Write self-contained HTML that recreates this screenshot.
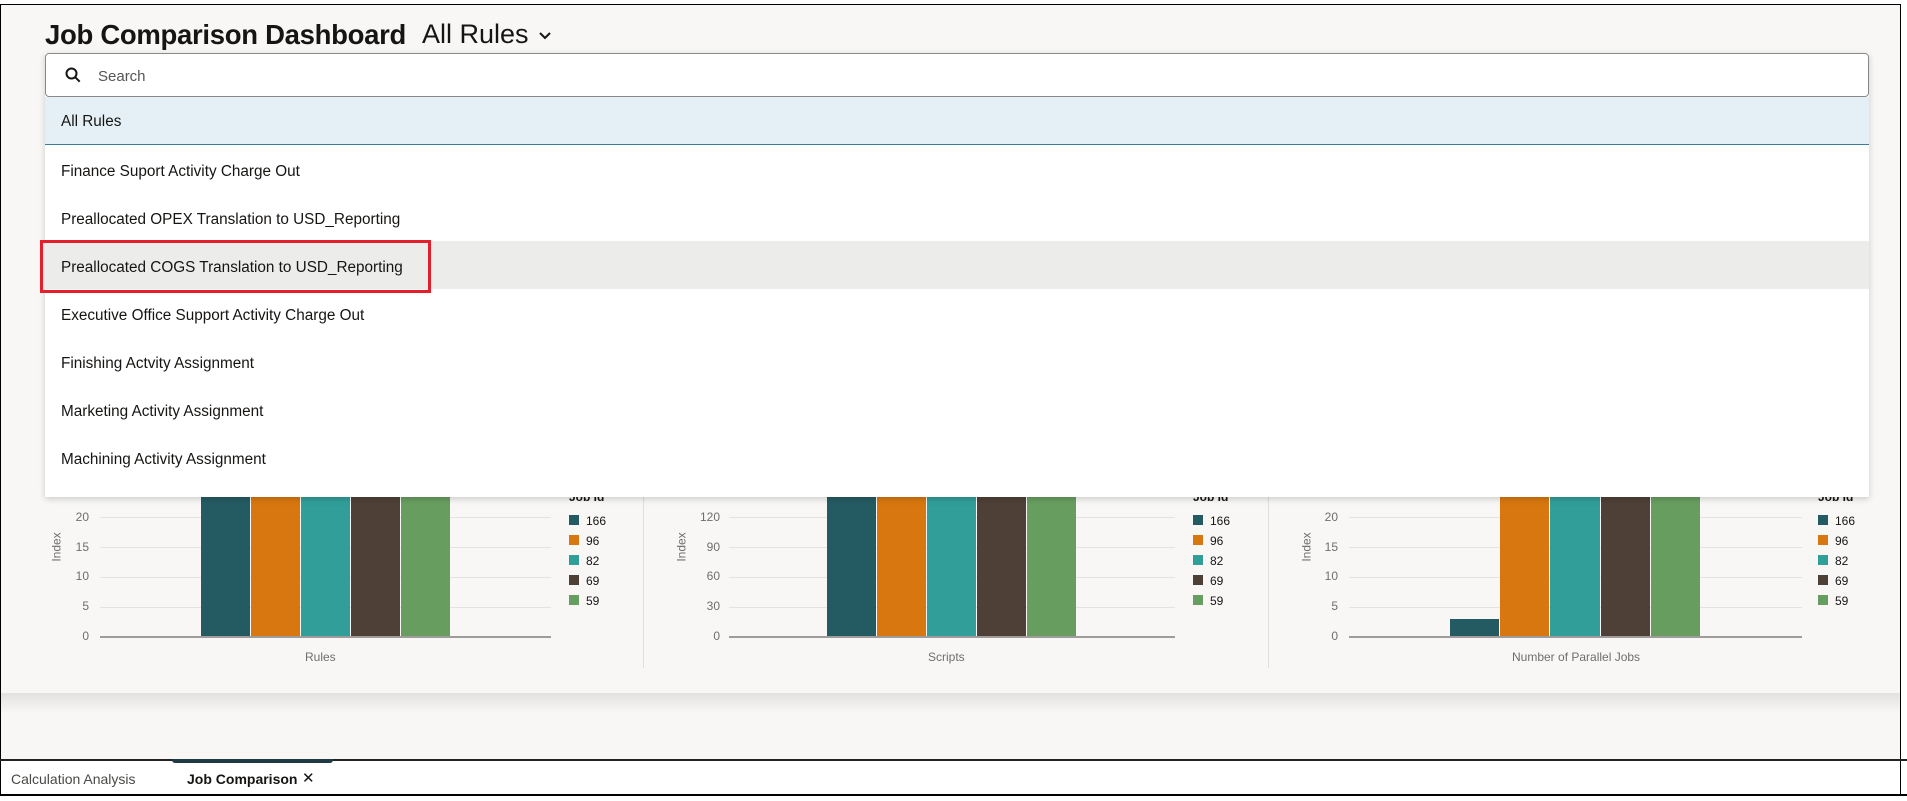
<!DOCTYPE html>
<html><head><meta charset="utf-8"><style>
*{margin:0;padding:0;box-sizing:border-box}
body{width:1907px;height:801px;overflow:hidden;background:#fff;font-family:"Liberation Sans",sans-serif;position:relative;color:#161513}
.abs{position:absolute}
.page{left:0;top:4px;width:1901px;height:755px;background:#f8f7f5;border-top:1px solid #000;border-left:1px solid #000;border-right:1px solid #000}
.panelshadow{left:1px;top:693px;width:1899px;height:20px;background:linear-gradient(#e2e1df,#f8f7f5)}
.grid{height:1px;background:#e4e3e1}
.base{height:2px;background:#9e9d9b}
.yl{font-size:12px;color:#6f6e6c;text-align:right;width:40px}
.idx{font-size:12px;color:#6f6e6c;transform:rotate(-90deg);transform-origin:center}
.bar{position:absolute}
.lg{font-size:12px;color:#161513}
.sq{width:10px;height:10px}
.dd{left:45px;top:53px;width:1824px;height:444px;background:#fff;box-shadow:0 2px 6px rgba(0,0,0,.18)}
.row{position:absolute;left:0;width:1824px;height:48px;font-size:15.3px;line-height:48px;padding-left:16px;padding-top:3px}
</style></head><body>
<div class="abs page"></div>
<div class="abs panelshadow"></div>
<div class="abs" style="left:0;top:759px;width:1907px;height:2px;background:#222"></div>
<div class="abs" style="left:0;top:761px;width:1901px;height:34px;background:#fff;border-left:1px solid #000;border-right:1px solid #000"></div>
<div class="abs" style="left:0;top:794px;width:1907px;height:2px;background:#000"></div>
<div class="abs" style="left:172px;top:759px;width:161px;height:4px;background:#1f3a44;border-radius:0 0 3px 3px"></div>
<div class="abs" style="left:11px;top:771px;font-size:14px;color:#4a4947">Calculation Analysis</div>
<div class="abs" style="left:187px;top:771px;font-size:14px;font-weight:bold">Job Comparison</div>
<div class="abs" style="left:302px;top:769px;font-size:15px">✕</div>

<div class="abs" style="left:45px;top:19px;font-size:27.5px;font-weight:bold;letter-spacing:-0.3px">Job Comparison Dashboard</div>
<div class="abs" style="left:422px;top:19px;font-size:27px">All Rules</div>
<svg class="abs" style="left:538px;top:31px" width="14" height="10" viewBox="0 0 14 10"><path d="M2 2l5 5 5-5" stroke="#161513" stroke-width="2" fill="none"/></svg>

<div class="abs" style="left:643px;top:497px;width:1px;height:171px;background:#e0dfdd"></div>
<div class="abs" style="left:1268px;top:497px;width:1px;height:171px;background:#e0dfdd"></div>

<!-- chart1 -->
<div class="abs grid" style="left:100px;top:517px;width:451px"></div>
<div class="abs grid" style="left:100px;top:547px;width:451px"></div>
<div class="abs grid" style="left:100px;top:577px;width:451px"></div>
<div class="abs grid" style="left:100px;top:607px;width:451px"></div>
<div class="bar" style="left:201px;top:497px;width:49px;height:139px;background:#245b63"></div>
<div class="bar" style="left:251px;top:497px;width:49px;height:139px;background:#d8770f"></div>
<div class="bar" style="left:301px;top:497px;width:49px;height:139px;background:#319e99"></div>
<div class="bar" style="left:351px;top:497px;width:49px;height:139px;background:#4e4037"></div>
<div class="bar" style="left:401px;top:497px;width:49px;height:139px;background:#679e5f"></div>
<div class="abs base" style="left:100px;top:636px;width:451px"></div>
<div class="abs yl" style="left:49px;top:510px">20</div>
<div class="abs yl" style="left:49px;top:540px">15</div>
<div class="abs yl" style="left:49px;top:569px">10</div>
<div class="abs yl" style="left:49px;top:599px">5</div>
<div class="abs yl" style="left:49px;top:629px">0</div>
<div class="abs idx" style="left:42px;top:540px">Index</div>
<div class="abs" style="left:305px;top:650px;font-size:12px;color:#6f6e6c">Rules</div>

<!-- chart2 -->
<div class="abs grid" style="left:729px;top:517px;width:446px"></div>
<div class="abs grid" style="left:729px;top:547px;width:446px"></div>
<div class="abs grid" style="left:729px;top:577px;width:446px"></div>
<div class="abs grid" style="left:729px;top:607px;width:446px"></div>
<div class="bar" style="left:827px;top:497px;width:49px;height:139px;background:#245b63"></div>
<div class="bar" style="left:877px;top:497px;width:49px;height:139px;background:#d8770f"></div>
<div class="bar" style="left:927px;top:497px;width:49px;height:139px;background:#319e99"></div>
<div class="bar" style="left:977px;top:497px;width:49px;height:139px;background:#4e4037"></div>
<div class="bar" style="left:1027px;top:497px;width:49px;height:139px;background:#679e5f"></div>
<div class="abs base" style="left:729px;top:636px;width:446px"></div>
<div class="abs yl" style="left:680px;top:510px">120</div>
<div class="abs yl" style="left:680px;top:540px">90</div>
<div class="abs yl" style="left:680px;top:569px">60</div>
<div class="abs yl" style="left:680px;top:599px">30</div>
<div class="abs yl" style="left:680px;top:629px">0</div>
<div class="abs idx" style="left:667px;top:540px">Index</div>
<div class="abs" style="left:928px;top:650px;font-size:12px;color:#6f6e6c">Scripts</div>

<!-- chart3 -->
<div class="abs grid" style="left:1349px;top:517px;width:453px"></div>
<div class="abs grid" style="left:1349px;top:547px;width:453px"></div>
<div class="abs grid" style="left:1349px;top:577px;width:453px"></div>
<div class="abs grid" style="left:1349px;top:607px;width:453px"></div>
<div class="bar" style="left:1450px;top:619px;width:49px;height:17px;background:#245b63"></div>
<div class="bar" style="left:1500px;top:497px;width:49px;height:139px;background:#d8770f"></div>
<div class="bar" style="left:1550px;top:497px;width:50px;height:139px;background:#319e99"></div>
<div class="bar" style="left:1601px;top:497px;width:49px;height:139px;background:#4e4037"></div>
<div class="bar" style="left:1651px;top:497px;width:49px;height:139px;background:#679e5f"></div>
<div class="abs base" style="left:1349px;top:636px;width:453px"></div>
<div class="abs yl" style="left:1298px;top:510px">20</div>
<div class="abs yl" style="left:1298px;top:540px">15</div>
<div class="abs yl" style="left:1298px;top:569px">10</div>
<div class="abs yl" style="left:1298px;top:599px">5</div>
<div class="abs yl" style="left:1298px;top:629px">0</div>
<div class="abs idx" style="left:1292px;top:540px">Index</div>
<div class="abs" style="left:1512px;top:650px;font-size:12px;color:#6f6e6c">Number of Parallel Jobs</div>

<!-- legends -->
<div class="abs" style="left:569px;top:490px;font-size:12px;font-weight:bold">Job Id</div>
<div class="abs" style="left:1193px;top:490px;font-size:12px;font-weight:bold">Job Id</div>
<div class="abs" style="left:1818px;top:490px;font-size:12px;font-weight:bold">Job Id</div>
<div class="abs" style="left:569px;top:515px">
<div style="display:flex;flex-direction:column;gap:10px"><div class="sq" style="background:#245b63"></div><div class="sq" style="background:#d8770f"></div><div class="sq" style="background:#319e99"></div><div class="sq" style="background:#4e4037"></div><div class="sq" style="background:#679e5f"></div></div></div>
<div class="abs" style="left:1193px;top:515px">
<div style="display:flex;flex-direction:column;gap:10px"><div class="sq" style="background:#245b63"></div><div class="sq" style="background:#d8770f"></div><div class="sq" style="background:#319e99"></div><div class="sq" style="background:#4e4037"></div><div class="sq" style="background:#679e5f"></div></div></div>
<div class="abs" style="left:1818px;top:515px">
<div style="display:flex;flex-direction:column;gap:10px"><div class="sq" style="background:#245b63"></div><div class="sq" style="background:#d8770f"></div><div class="sq" style="background:#319e99"></div><div class="sq" style="background:#4e4037"></div><div class="sq" style="background:#679e5f"></div></div></div>
<div class="abs lg" style="left:586px;top:511px;line-height:20px">166<br>96<br>82<br>69<br>59</div>
<div class="abs lg" style="left:1210px;top:511px;line-height:20px">166<br>96<br>82<br>69<br>59</div>
<div class="abs lg" style="left:1835px;top:511px;line-height:20px">166<br>96<br>82<br>69<br>59</div>

<!-- dropdown -->
<div class="abs dd">
  <div class="abs" style="left:0;top:0;width:1824px;height:44px;border:1px solid #8a8987;border-radius:4px;background:#fff"></div>
  <svg class="abs" style="left:20px;top:14px" width="16" height="16" viewBox="0 0 16 16"><circle cx="6.5" cy="6.5" r="5" stroke="#161513" stroke-width="2" fill="none"/><path d="M10.2 10.2l4.5 4.5" stroke="#161513" stroke-width="2"/></svg>
  <div class="abs" style="left:53px;top:15px;font-size:15px;color:#555">Search</div>
  <div class="row" style="top:44px;height:48px;background:#e4f0f6;border-bottom:1px solid #3d7a96;line-height:44px">All Rules</div>
  <div class="row" style="top:92px">Finance Suport Activity Charge Out</div>
  <div class="row" style="top:140px">Preallocated OPEX Translation to USD_Reporting</div>
  <div class="row" style="top:188px;background:#ececea">Preallocated COGS Translation to USD_Reporting</div>
  <div class="row" style="top:236px">Executive Office Support Activity Charge Out</div>
  <div class="row" style="top:284px">Finishing Actvity Assignment</div>
  <div class="row" style="top:332px">Marketing Activity Assignment</div>
  <div class="row" style="top:380px">Machining Activity Assignment</div>
</div>
<div class="abs" style="left:40px;top:240px;width:391px;height:53px;border:3px solid #e21f2b"></div>
</body></html>
